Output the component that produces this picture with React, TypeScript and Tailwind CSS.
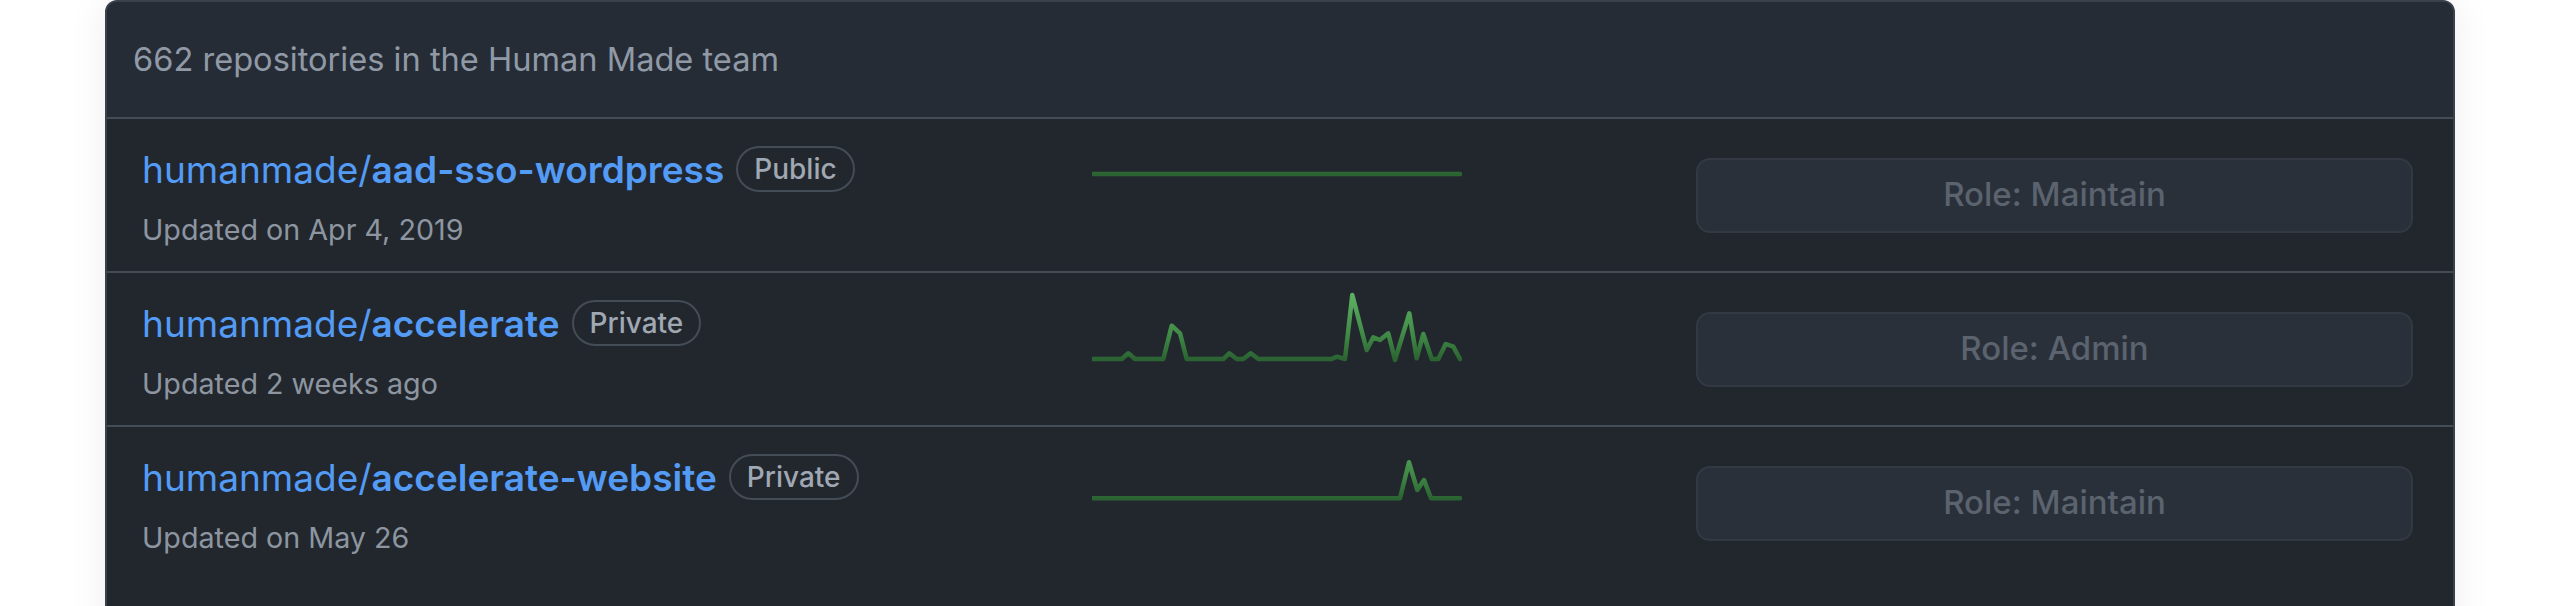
const repos = [
  {
    owner: 'humanmade/',
    name: 'aad-sso-wordpress',
    visibility: 'Public',
    updated: 'Updated on Apr 4, 2019',
    role: 'Role: Maintain',
    base: 55,
    points: '1.3,55 368,55',
  },
  {
    owner: 'humanmade/',
    name: 'accelerate',
    visibility: 'Private',
    updated: 'Updated 2 weeks ago',
    role: 'Role: Admin',
    base: 86,
    points:
      '1.3,86 29.7,86 36.3,80.3 43,86 71.3,86 79.7,52.7 88,60.3 94.7,86 131.3,86 137.3,80.3 144.7,86 151.3,86 158.7,80.3 166.3,86 239.7,86 244.7,83.7 253,86 260.3,22 274.7,77 281.3,64.3 288,67 296.3,60.3 303,87 317.3,40.3 324.7,85.3 331.3,61 339.7,86 346.3,86 353.7,71 361.3,73.7 368,86',
  },
  {
    owner: 'humanmade/',
    name: 'accelerate-website',
    visibility: 'Private',
    updated: 'Updated on May 26',
    role: 'Role: Maintain',
    base: 71.3,
    points: '1.3,71.3 308,71.3 317,35.3 325.3,63 332,53 339,71.3 368,71.3',
  },
];

function Sparkline({ points, base, id }: { points: string; base: number; id: string }) {
  return (
    <svg width="370" height="152" viewBox="0 0 370 152" className="shrink-0">
      <defs>
        <linearGradient id={id} x1="0" y1={base} x2="0" y2={base - 64} gradientUnits="userSpaceOnUse">
          <stop offset="0" stopColor="#2b6432" />
          <stop offset="0.35" stopColor="#3f8745" />
          <stop offset="1" stopColor="#5cb062" />
        </linearGradient>
      </defs>
      <polyline
        points={points}
        fill="none"
        stroke={`url(#${id})`}
        strokeWidth="4.5"
        strokeLinejoin="round"
        strokeLinecap="round"
      />
    </svg>
  );
}

export default function App() {
  return (
    <div className="h-[606px] overflow-hidden bg-white font-['Inter',sans-serif]">
      <div className="mx-[105px] h-[700px] rounded-t-[12px] border-2 border-[#3a414b] bg-[#22272e] shadow-[0_0_40px_rgba(0,0,0,0.07)]">
        {/* Header */}
        <div className="flex h-[117px] items-center rounded-t-[10px] border-b-2 border-[#444c56] bg-[#262c36] pl-[26px]">
          <span className="text-[32.6px] text-[#909aa6]">662 repositories in the Human Made team</span>
        </div>

        {repos.map((repo, i) => (
          <div
            key={repo.name}
            className={`flex h-[152px] items-center pl-[35px] pr-[40px] ${i < repos.length - 1 ? 'box-content border-b-2 border-[#444c56]' : ''}`}
          >
            <div className="flex h-full w-[950px] shrink-0 flex-col pt-[27px]">
              <div className="flex h-[46px] items-center gap-[12px]">
                <a href="#" className="text-[37px] leading-none text-[#539bf5]">
                  {repo.owner}
                  <span className="font-semibold">{repo.name}</span>
                </a>
                <span className="flex h-[46px] items-center rounded-full border-2 border-[#444c56] px-[16px] text-[28px] font-medium text-[#a0a8b3]">
                  {repo.visibility}
                </span>
              </div>
              <div className="mt-[18px] flex h-[40px] items-center text-[28.7px] text-[#8d96a0]">{repo.updated}</div>
            </div>

            <Sparkline points={repo.points} base={repo.base} id={`spark-${i}`} />

            <button className="ml-auto flex h-[75px] w-[717px] items-center justify-center rounded-[14px] border-2 border-[#323943] bg-[#2a303a] text-[33px] font-medium text-[#5a636e]">
              {repo.role}
            </button>
          </div>
        ))}
      </div>
    </div>
  );
}
